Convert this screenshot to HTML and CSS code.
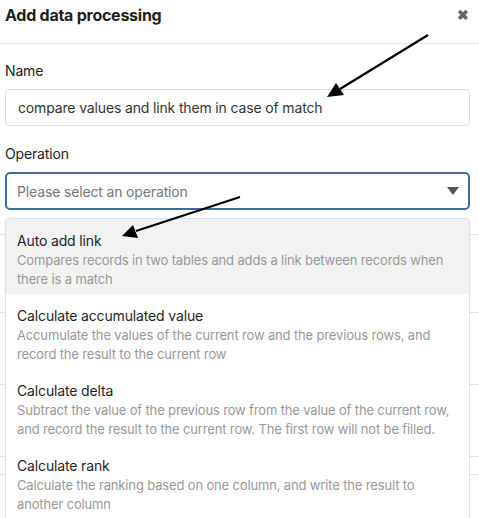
FILE: index.html
```html
<!DOCTYPE html>
<html>
<head>
<meta charset="utf-8">
<link rel="stylesheet" href="styles.css">
</head>
<body>
<div class="dialog">
  <div class="header">
    <div class="title">Add data processing</div>
    <div class="close">&#x2716;</div>
  </div>
  <div class="content">
    <div class="label">Name</div>
    <div class="input">compare values and link them in case of match</div>
    <div class="label label-op">Operation</div>
    <div class="select">
      <span class="placeholder">Please select an operation</span>
      <svg class="caret" width="12" height="8" viewBox="0 0 12 8"><path d="M0 0 H12 L6 8 Z" fill="#555"/></svg>
    </div>
    <div class="bg-lines">
      <div class="bg-line l1"></div>
      <div class="bg-line l2"></div>
      <div class="bg-line l3"></div>
      <div class="bg-line l4"></div>
      <div class="bg-line l5"></div>
    </div>
    <div class="menu">
      <div class="item active">
        <div class="item-title">Auto add link</div>
        <div class="item-desc">Compares records in two tables and adds a link between records when there is a match</div>
      </div>
      <div class="item">
        <div class="item-title">Calculate accumulated value</div>
        <div class="item-desc">Accumulate the values of the current row and the previous rows, and record the result to the current row</div>
      </div>
      <div class="item">
        <div class="item-title">Calculate delta</div>
        <div class="item-desc">Subtract the value of the previous row from the value of the current row, and record the result to the current row. The first row will not be filled.</div>
      </div>
      <div class="item">
        <div class="item-title">Calculate rank</div>
        <div class="item-desc">Calculate the ranking based on one column, and write the result to another column</div>
      </div>
    </div>
  </div>
  <svg class="arrows" width="479" height="518" viewBox="0 0 479 518">
    <line x1="428" y1="35" x2="340" y2="89" stroke="#000" stroke-width="2.2"/>
    <path d="M327 97 L336 83 L344 95 Z" fill="#000"/>
    <line x1="240" y1="197" x2="136" y2="231" stroke="#000" stroke-width="2.2"/>
    <path d="M122 236 L133 225 L138 238 Z" fill="#000"/>
  </svg>
</div>
</body>
</html>
```

FILE: styles.css
```css
* { box-sizing: border-box; }
html, body { margin: 0; padding: 0; background: #fff; }
body {
  font-family: Inter, "Liberation Sans", Arial, sans-serif;
  color: #222;
  width: 479px;
  height: 518px;
  overflow: hidden;
  letter-spacing: -0.15px;
}
.dialog { position: relative; width: 479px; height: 518px; overflow: hidden; }
.header {
  height: 44px;
  display: flex;
  align-items: center;
  justify-content: space-between;
  padding: 0 10px 14px 5px;
  border-bottom: 1px solid #e4e4e4;
}
.title { font-size: 16px; font-weight: 700; color: #1f1f1f; letter-spacing: -0.25px; }
.close { font-size: 14px; color: #666; font-weight: bold; }
.content { position: relative; padding: 17px 9px 0 5px; }
.label { font-size: 14px; color: #222; line-height: 20px; }
.input {
  margin-top: 8px;
  height: 37px;
  border: 1px solid #dedede;
  border-radius: 4px;
  padding: 0 12px;
  font-size: 14px;
  color: #333;
  display: flex;
  align-items: center;
}
.label-op { margin-top: 18px; }
.select {
  margin-top: 8px;
  height: 38px;
  border: 2px solid #3f6da3;
  border-radius: 5px;
  padding: 0 9px 0 10px;
  display: flex;
  align-items: center;
  justify-content: space-between;
}
.placeholder { font-size: 14px; color: #777; }
.bg-lines { position: relative; margin-left: -5px; margin-right: -9px; height: 300px; }
.bg-line { position: absolute; left: 0; right: 0; height: 1px; background: #e2e2e2; }
.l1 { top: 24px; }
.l2 { top: 102px; }
.l3 { top: 174px; }
.l4 { top: 246px; }
.l5 { top: 264px; }
.menu {
  position: absolute;
  left: 5px;
  right: 9px;
  top: 174px;
  height: 301px;
  background: #fff;
  border: 1px solid #e0e0e0;
  border-bottom: none;
  border-radius: 4px 4px 0 0;
  box-shadow: 0 1px 4px rgba(0,0,0,0.06);
  overflow: hidden;
}
.item { padding: 12px 12px 5px 11px; }
.item.active { background: #f2f2f2; }
.item-title { font-size: 14px; line-height: 20px; color: #1f1f1f; }
.item-desc { font-size: 13px; line-height: 19px; color: #999; }
.arrows { position: absolute; left: 0; top: 0; pointer-events: none; }
```
